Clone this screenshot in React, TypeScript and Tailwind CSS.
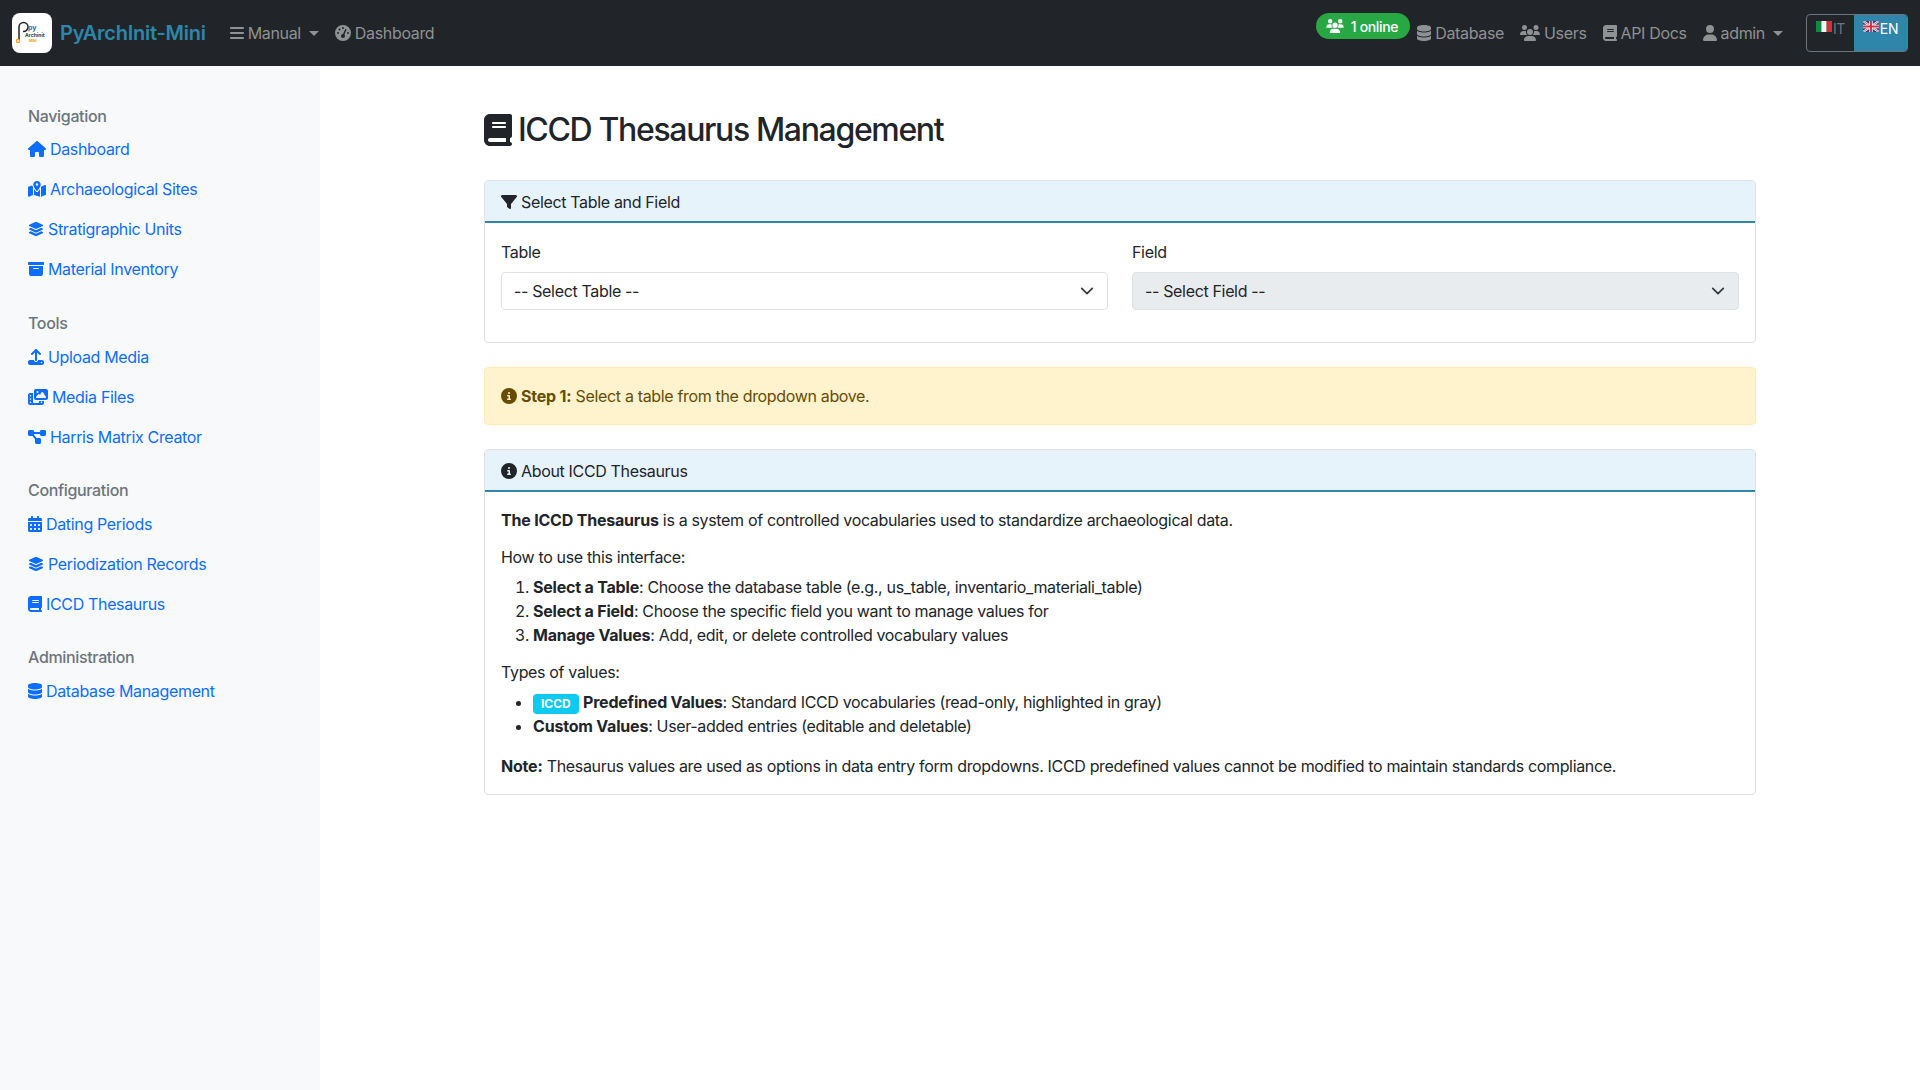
import {
  FaBars,
  FaBook,
  FaBoxArchive,
  FaCalendarDays,
  FaCircleInfo,
  FaDatabase,
  FaDiagramProject,
  FaFilter,
  FaGaugeHigh,
  FaHouse,
  FaLayerGroup,
  FaMapLocationDot,
  FaPhotoFilm,
  FaUpload,
  FaUser,
  FaUsers,
} from "react-icons/fa6";
import type { IconType } from "react-icons";

type NavItem = { label: string; icon: IconType; width: string };

const sections: { title: string; items: NavItem[] }[] = [
  {
    title: "Navigation",
    items: [
      { label: "Dashboard", icon: FaHouse, width: "w-[18px]" },
      { label: "Archaeological Sites", icon: FaMapLocationDot, width: "w-[18px]" },
      { label: "Stratigraphic Units", icon: FaLayerGroup, width: "w-4" },
      { label: "Material Inventory", icon: FaBoxArchive, width: "w-4" },
    ],
  },
  {
    title: "Tools",
    items: [
      { label: "Upload Media", icon: FaUpload, width: "w-4" },
      { label: "Media Files", icon: FaPhotoFilm, width: "w-5" },
      { label: "Harris Matrix Creator", icon: FaDiagramProject, width: "w-[18px]" },
    ],
  },
  {
    title: "Configuration",
    items: [
      { label: "Dating Periods", icon: FaCalendarDays, width: "w-3.5" },
      { label: "Periodization Records", icon: FaLayerGroup, width: "w-4" },
      { label: "ICCD Thesaurus", icon: FaBook, width: "w-3.5" },
    ],
  },
  {
    title: "Administration",
    items: [{ label: "Database Management", icon: FaDatabase, width: "w-3.5" }],
  },
];

function Logo() {
  return (
    <div className="w-10 h-10 rounded-lg bg-white shrink-0">
      <svg width="40" height="40" viewBox="0 0 40 40">
        <path d="M7 27V14a4.5 4.5 0 0 1 9 0a4.5 4.5 0 0 1-5 4.5" fill="none" stroke="#222" strokeWidth="1.5" />
        <circle cx="6" cy="28" r="1.6" fill="none" stroke="#f39c12" strokeWidth="1.2" />
        <text x="16" y="17" fontSize="7" fontWeight="700" letterSpacing="0" fill="#2e6da4">py</text>
        <text x="13" y="23.5" fontSize="5.2" fontWeight="600" letterSpacing="0" fill="#222">Archinit</text>
        <text x="17" y="29" fontSize="3.4" fontWeight="700" letterSpacing="0" fill="#f39c12">MINI</text>
      </svg>
    </div>
  );
}

function Caret() {
  return (
    <svg width="10" height="5" viewBox="0 0 10 5" className="ml-1">
      <path d="M0 0h10L5 5z" fill="currentColor" />
    </svg>
  );
}

function TopLink({ icon: Icon, label, width, caret }: NavItem & { caret?: boolean }) {
  return (
    <a className="flex items-center gap-1 text-[#8f9193] leading-6">
      <Icon className={`h-4 ${width}`} />
      <span>{label}</span>
      {caret && <Caret />}
    </a>
  );
}

function Navbar() {
  return (
    <nav className="h-[66px] bg-[#212529] flex items-center px-3">
      <Logo />
      <span className="ml-2 text-[20px] font-semibold tracking-[-0.25px] text-[#2e86ab]">PyArchInit-Mini</span>
      <div className="ml-6 flex items-center gap-4">
        <TopLink icon={FaBars} label="Manual" width="w-3.5" caret />
        <TopLink icon={FaGaugeHigh} label="Dashboard" width="w-4" />
      </div>
      <div className="ml-auto flex items-center">
        <span className="h-[26px] mb-[14px] pl-[10px] pr-[12px] rounded-full bg-[#28a745] text-white text-[14px] font-medium flex items-center gap-[7px]">
          <FaUsers className="h-3.5 w-[18px]" />1 online
        </span>
        <div className="ml-[7px] flex items-center gap-4">
          <TopLink icon={FaDatabase} label="Database" width="w-3.5" />
          <TopLink icon={FaUsers} label="Users" width="w-5" />
          <TopLink icon={FaBook} label="API Docs" width="w-3.5" />
          <TopLink icon={FaUser} label="admin" width="w-3.5" caret />
        </div>
        <div className="ml-[23px] h-[38px] w-[102px] flex text-[14px] rounded border border-[#6c757d] overflow-hidden">
          <span className="w-[47px] flex items-start justify-center pt-[3px] gap-px text-[#6c757d]">
            <svg width="16" height="11" viewBox="0 0 3 2" preserveAspectRatio="none" className="mt-[3px]">
              <rect width="1" height="2" fill="#0b8a44" />
              <rect x="1" width="1" height="2" fill="#f4f5f0" />
              <rect x="2" width="1" height="2" fill="#d3303c" />
            </svg>
            IT
          </span>
          <span className="flex-1 bg-[#2e86ab] text-white flex items-start justify-center pt-[3px] gap-px">
            <svg width="16" height="11" viewBox="0 0 16 11" className="mt-[3px]">
              <rect width="16" height="11" fill="#27408b" />
              <path d="M0 0L16 11M16 0L0 11" stroke="#fff" strokeWidth="2.2" />
              <path d="M0 0L16 11M16 0L0 11" stroke="#d3303c" strokeWidth="0.8" />
              <path d="M8 0V11M0 5.5H16" stroke="#fff" strokeWidth="3.4" />
              <path d="M8 0V11M0 5.5H16" stroke="#d3303c" strokeWidth="1.9" />
            </svg>
            EN
          </span>
        </div>
      </div>
    </nav>
  );
}

function Sidebar() {
  return (
    <aside className="w-80 shrink-0 bg-[#f8f9fa] pl-7 pt-[41px]">
      {sections.map((section, index) => (
        <div key={section.title} className={index === 0 ? "mb-[25px]" : "mb-6"}>
          <h6
            className={
              index === 0
                ? "h-[19px] leading-[19px] mb-[3px] font-medium text-[#6c757d]"
                : "h-[19px] leading-[19px] mb-1 font-medium text-[#6c757d]"
            }
          >
            {section.title}
          </h6>
          {section.items.map(({ label, icon: Icon, width }) => (
            <a key={label} className="h-10 flex items-center gap-1 text-[#0d6efd]">
              <Icon className={`h-4 shrink-0 ${width}`} />
              {label}
            </a>
          ))}
        </div>
      ))}
    </aside>
  );
}

function CardHeader({ icon: Icon, title }: { icon: IconType; title: string }) {
  return (
    <div className="h-[42px] pt-px px-4 flex items-center gap-1 bg-[#e7f3fb] border-b-2 border-[#2e86ab] rounded-t">
      <Icon className="h-4 w-4" />
      {title}
    </div>
  );
}

function SelectBox({ label, placeholder, disabled }: { label: string; placeholder: string; disabled?: boolean }) {
  return (
    <div className="flex-1">
      <label className="block mb-2 leading-6">{label}</label>
      <div
        className={
          disabled
            ? "h-[38px] pl-3 pr-[13px] flex items-center justify-between rounded border border-[#dee2e6] bg-[#e9ecef]"
            : "h-[38px] pl-3 pr-[13px] flex items-center justify-between rounded border border-[#dee2e6] bg-white"
        }
      >
        {placeholder}
        <svg width="14" height="14" viewBox="0 0 16 16" fill="none">
          <path d="M2 5l6 6 6-6" stroke="#343a40" strokeWidth="2" strokeLinecap="round" strokeLinejoin="round" />
        </svg>
      </div>
    </div>
  );
}

function B({ children }: { children: string }) {
  return <strong className="font-bold tracking-[-0.2px]">{children}</strong>;
}

function Main() {
  return (
    <main className="flex-1 pt-[42px] pb-10">
      <div className="w-[1272px] mx-auto">
        <h1 className="h-[44px] mb-[28px] flex items-center gap-[6px] text-[32px] font-medium tracking-[-1.35px]">
          <FaBook className="h-8 w-7" />
          ICCD Thesaurus Management
        </h1>

        <section className="rounded border border-[#dfe2e5] mb-6">
          <CardHeader icon={FaFilter} title="Select Table and Field" />
          <div className="pt-[17px] px-4 pb-8 flex gap-6">
            <SelectBox label="Table" placeholder="-- Select Table --" />
            <SelectBox label="Field" placeholder="-- Select Field --" disabled />
          </div>
        </section>

        <div className="h-[58px] px-4 mb-6 flex items-center gap-1 rounded border border-[#ffecb5] bg-[#fff3cd] text-[#664d03]">
          <FaCircleInfo className="h-4 w-4" />
          <p>
            <B>Step 1:</B> Select a table from the dropdown above.
          </p>
        </div>

        <section className="rounded border border-[#dfe2e5]">
          <CardHeader icon={FaCircleInfo} title="About ICCD Thesaurus" />
          <div className="p-4">
            <p className="mb-[13px]">
              <B>The ICCD Thesaurus</B> is a system of controlled vocabularies used to standardize archaeological data.
            </p>
            <p className="mb-1.5">How to use this interface:</p>
            <ol className="list-decimal pl-8 mb-[13px]">
              <li>
                <B>Select a Table</B>: Choose the database table (e.g., us_table, inventario_materiali_table)
              </li>
              <li>
                <B>Select a Field</B>: Choose the specific field you want to manage values for
              </li>
              <li>
                <B>Manage Values</B>: Add, edit, or delete controlled vocabulary values
              </li>
            </ol>
            <p className="mb-1.5">Types of values:</p>
            <ul className="list-disc pl-8 mb-4">
              <li>
                <span className="inline-block px-[8px] py-1 rounded bg-[#0dcaf0] text-white text-xs font-bold leading-3 tracking-normal">
                  ICCD
                </span>{" "}
                <B>Predefined Values</B>: Standard ICCD vocabularies (read-only, highlighted in gray)
              </li>
              <li>
                <B>Custom Values</B>: User-added entries (editable and deletable)
              </li>
            </ul>
            <p>
              <B>Note:</B> Thesaurus values are used as options in data entry form dropdowns. ICCD predefined values
              cannot be modified to maintain standards compliance.
            </p>
          </div>
        </section>
      </div>
    </main>
  );
}

export default function App() {
  return (
    <div className="min-h-[1090px] flex flex-col bg-white text-[#212529] text-base tracking-[-0.34px] [font-family:Inter,sans-serif]">
      <Navbar />
      <div className="flex flex-1">
        <Sidebar />
        <Main />
      </div>
    </div>
  );
}
